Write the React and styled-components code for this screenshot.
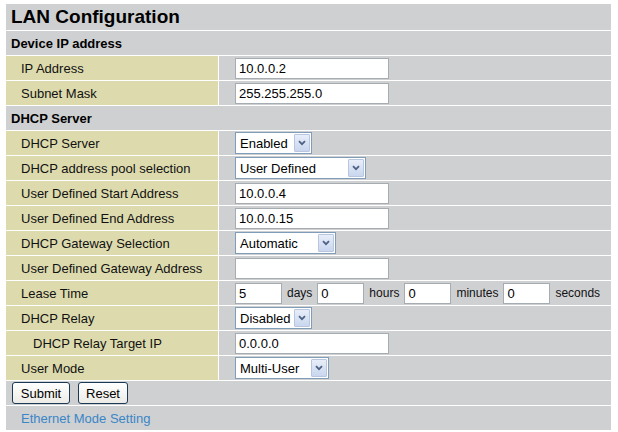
import styled, { createGlobalStyle } from "styled-components";

const GlobalStyle = createGlobalStyle`
  html, body {
    margin: 0;
    background: #ffffff;
  }
  body {
    padding: 4px 7px 0 6px;
    font-family: "Liberation Sans", Arial, sans-serif;
    font-size: 13px;
    color: #000;
  }
`;

const Table = styled.div`
  display: grid;
  grid-template-columns: 212px 1fr;
  grid-template-rows: 26px;
  grid-auto-rows: 24px;
  gap: 1px;
  background: #ffffff;
`;

const Title = styled.div`
  grid-column: 1 / -1;
  background: #cfd0d2;
  display: flex;
  align-items: center;
  padding-left: 5px;
  font-size: 19px;
  font-weight: bold;
`;

const Section = styled.div`
  grid-column: 1 / -1;
  background: #cfd0d2;
  display: flex;
  align-items: center;
  padding-left: 5px;
  font-size: 13px;
  font-weight: bold;
`;

const Label = styled.div`
  background: #dddbae;
  display: flex;
  align-items: center;
  padding-left: ${({ $indent }) => ($indent ? 27 : 15)}px;
  white-space: nowrap;
  color: #111;
`;

const Value = styled.div`
  background: #cfd0d2;
  display: flex;
  align-items: center;
  padding-left: 16px;
  gap: 5px;
  white-space: nowrap;
`;

const Unit = styled.span`
  font-size: 12px;
  color: #111;
`;

const TextBox = styled.input`
  box-sizing: border-box;
  width: ${({ $w }) => $w || 154}px;
  height: 21px;
  margin: 0;
  padding: 1px 3px 0;
  border: 1px solid #a5acb2;
  background: #fff;
  font-family: "Liberation Sans", Arial, sans-serif;
  font-size: 13px;
  color: #000;
  outline: none;
`;

const SelectBox = styled.div`
  box-sizing: border-box;
  width: ${({ $w }) => $w}px;
  height: 22px;
  border: 1px solid #7f9db9;
  background: #fff;
  display: flex;
  align-items: center;
  justify-content: space-between;
  padding: 1px 1px 1px 4px;
  font-size: 13px;
`;

const Arrow = styled.span`
  box-sizing: border-box;
  width: 16px;
  height: 18px;
  border: 1px solid #b8c6e0;
  border-radius: 1px;
  background: linear-gradient(#e8eef9, #c9d6ee);
  display: flex;
  align-items: center;
  justify-content: center;
`;

const ButtonRow = styled.div`
  grid-column: 1 / -1;
  background: #cfd0d2;
  display: flex;
  align-items: center;
  gap: 8px;
  padding-left: 6px;
`;

const Button = styled.button`
  box-sizing: border-box;
  width: ${({ $w }) => $w}px;
  height: 22px;
  padding: 0;
  margin: 0;
  border: 1px solid #1c3a57;
  border-radius: 3px;
  background: linear-gradient(#ffffff, #ecebe6);
  font-family: "Liberation Sans", Arial, sans-serif;
  font-size: 13px;
  color: #000;
`;

const LinkRow = styled.div`
  grid-column: 1 / -1;
  background: #cfd0d2;
  display: flex;
  align-items: center;
  padding-left: 15px;
  a {
    color: #3a86c6;
    text-decoration: none;
  }
`;

const Select = ({ value, w }) => (
  <SelectBox $w={w}>
    <span>{value}</span>
    <Arrow>
      <svg width="8" height="6" viewBox="0 0 8 6">
        <path d="M1 1.2 L4 4.2 L7 1.2" fill="none" stroke="#4d6185" strokeWidth="1.8" />
      </svg>
    </Arrow>
  </SelectBox>
);

const Row = ({ label, indent, children }) => (
  <>
    <Label $indent={indent}>{label}</Label>
    <Value>{children}</Value>
  </>
);

export default function App() {
  return (
    <>
      <GlobalStyle />
      <Table>
        <Title>LAN Configuration</Title>
        <Section>Device IP address</Section>
        <Row label="IP Address">
          <TextBox defaultValue="10.0.0.2" />
        </Row>
        <Row label="Subnet Mask">
          <TextBox defaultValue="255.255.255.0" />
        </Row>
        <Section>DHCP Server</Section>
        <Row label="DHCP Server">
          <Select value="Enabled" w={77} />
        </Row>
        <Row label="DHCP address pool selection">
          <Select value="User Defined" w={131} />
        </Row>
        <Row label="User Defined Start Address">
          <TextBox defaultValue="10.0.0.4" />
        </Row>
        <Row label="User Defined End Address">
          <TextBox defaultValue="10.0.0.15" />
        </Row>
        <Row label="DHCP Gateway Selection">
          <Select value="Automatic" w={101} />
        </Row>
        <Row label="User Defined Gateway Address">
          <TextBox defaultValue="" />
        </Row>
        <Row label="Lease Time">
          <TextBox $w={47} defaultValue="5" />
          <Unit>days</Unit>
          <TextBox $w={47} defaultValue="0" />
          <Unit>hours</Unit>
          <TextBox $w={47} defaultValue="0" />
          <Unit>minutes</Unit>
          <TextBox $w={47} defaultValue="0" />
          <Unit>seconds</Unit>
        </Row>
        <Row label="DHCP Relay">
          <Select value="Disabled" w={77} />
        </Row>
        <Row label="DHCP Relay Target IP" indent>
          <TextBox defaultValue="0.0.0.0" />
        </Row>
        <Row label="User Mode">
          <Select value="Multi-User" w={94} />
        </Row>
        <ButtonRow>
          <Button $w={58}>Submit</Button>
          <Button $w={50}>Reset</Button>
        </ButtonRow>
        <LinkRow>
          <a href="#ethernet">Ethernet Mode Setting</a>
        </LinkRow>
      </Table>
    </>
  );
}
